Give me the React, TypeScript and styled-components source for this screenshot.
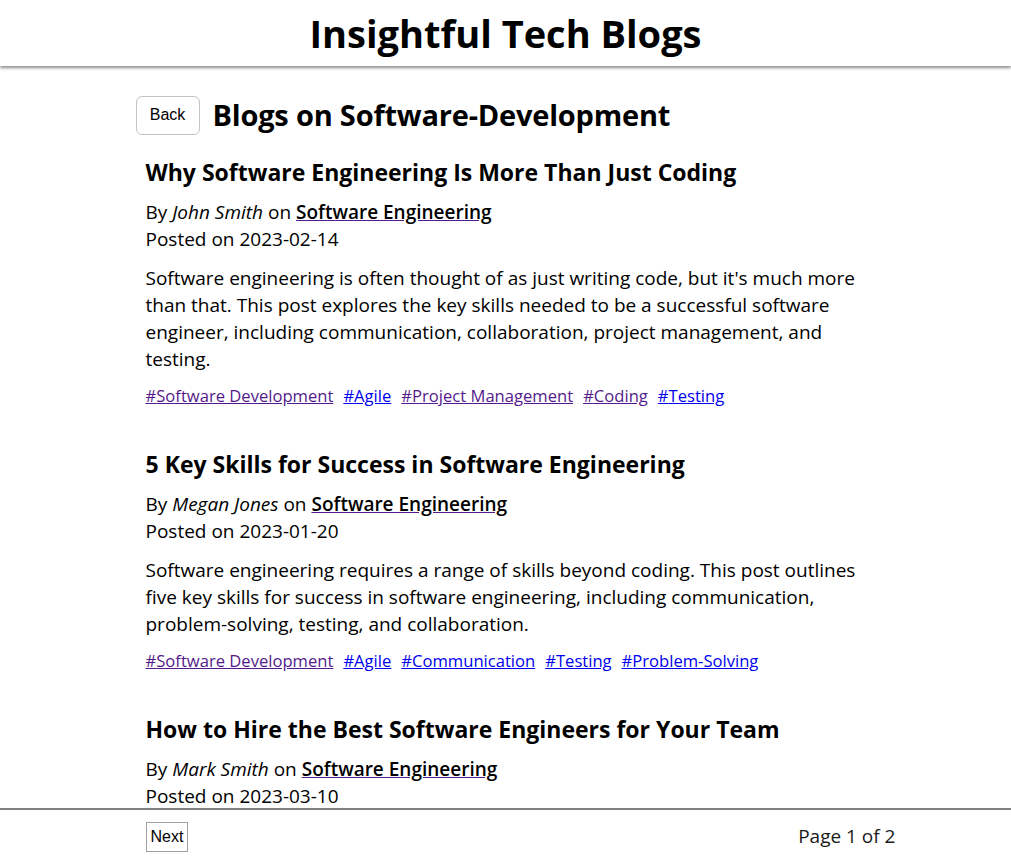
import React from "react";
import styled, { createGlobalStyle } from "styled-components";

const GlobalStyle = createGlobalStyle`
  html, body {
    margin: 0;
    padding: 0;
    background: #ffffff;
    color: #000000;
    font-family: "Open Sans", "Noto Sans", sans-serif;
  }
  * { box-sizing: border-box; }
`;

const Header = styled.header`
  height: 66px;
  display: flex;
  align-items: center;
  justify-content: center;
  background: #ffffff;
  box-shadow: 0 2px 3px rgba(0, 0, 0, 0.45);
  position: relative;
  z-index: 1;
`;

const SiteTitle = styled.h1`
  margin: 0;
  font-size: 38px;
  font-weight: 700;
  line-height: 48px;
`;

const Main = styled.main`
  max-width: 800px;
  margin: 0 auto;
  padding: 29px 30px 80px 30px;
`;

const TopRow = styled.div`
  display: flex;
  align-items: center;
  gap: 13px;
`;

const BackButton = styled.button`
  height: 39px;
  width: 64px;
  padding: 0;
  background: #ffffff;
  border: 1px solid #c4c4c4;
  border-radius: 6px;
  font-family: "Liberation Sans", Arial, sans-serif;
  font-size: 16px;
  color: #000000;
  cursor: pointer;
`;

const PageHeading = styled.h2`
  margin: 0;
  font-size: 29px;
  font-weight: 700;
  line-height: 40px;
  letter-spacing: -0.2px;
`;

const PostList = styled.div`
  padding-left: 10px;
  margin-top: 21px;
`;

const Post = styled.article`
  margin-bottom: 40px;
`;

const PostTitle = styled.h3`
  margin: 0 0 11px 0;
  font-size: 23px;
  font-weight: 700;
  line-height: 32px;
`;

const Meta = styled.div`
  font-size: 19px;
  line-height: 27px;
`;

const Author = styled.em`
  font-style: italic;
`;

const CategoryLink = styled.a`
  color: #000000;
  font-weight: 600;
  text-decoration: underline;
  text-decoration-color: #551a8b;
`;

const Description = styled.p`
  margin: 12px 0 11px 0;
  font-size: 19px;
  line-height: 27px;
`;

const Tags = styled.div`
  display: flex;
  flex-wrap: wrap;
  gap: 10px;
  font-size: 16.6px;
  line-height: 24px;
`;

const Tag = styled.a<{ $visited?: boolean }>`
  color: ${(p) => (p.$visited ? "#551a8b" : "#0000ee")};
  text-decoration: underline;
`;

const Footer = styled.footer`
  position: fixed;
  left: 0;
  right: 0;
  bottom: 0;
  height: 55px;
  background: #ffffff;
  border-top: 2px solid #808080;
  z-index: 2;
`;

const FooterInner = styled.div`
  max-width: 800px;
  height: 100%;
  margin: 0 auto;
  padding: 0 10px 0 40px;
  display: flex;
  align-items: center;
  justify-content: space-between;
`;

const NextButton = styled.button`
  height: 30px;
  padding: 0 4px;
  background: #ffffff;
  border: 1px solid #a0a0a0;
  border-radius: 0;
  font-family: "Liberation Sans", Arial, sans-serif;
  font-size: 16px;
  color: #000000;
`;

const PageInfo = styled.span`
  font-size: 19px;
  line-height: 27px;
  color: #1a1a1a;
`;

type TagItem = { label: string; visited?: boolean };
type PostItem = {
  title: string;
  author: string;
  category: string;
  date: string;
  description?: string;
  tags: TagItem[];
};

const posts: PostItem[] = [
  {
    title: "Why Software Engineering Is More Than Just Coding",
    author: "John Smith",
    category: "Software Engineering",
    date: "2023-02-14",
    description:
      "Software engineering is often thought of as just writing code, but it's much more than that. This post explores the key skills needed to be a successful software engineer, including communication, collaboration, project management, and testing.",
    tags: [
      { label: "Software Development", visited: true },
      { label: "Agile" },
      { label: "Project Management", visited: true },
      { label: "Coding", visited: true },
      { label: "Testing" },
    ],
  },
  {
    title: "5 Key Skills for Success in Software Engineering",
    author: "Megan Jones",
    category: "Software Engineering",
    date: "2023-01-20",
    description:
      "Software engineering requires a range of skills beyond coding. This post outlines five key skills for success in software engineering, including communication, problem-solving, testing, and collaboration.",
    tags: [
      { label: "Software Development", visited: true },
      { label: "Agile" },
      { label: "Communication" },
      { label: "Testing" },
      { label: "Problem-Solving" },
    ],
  },
  {
    title: "How to Hire the Best Software Engineers for Your Team",
    author: "Mark Smith",
    category: "Software Engineering",
    date: "2023-03-10",
    tags: [],
  },
];

export default function App() {
  return (
    <>
      <GlobalStyle />
      <Header>
        <SiteTitle>Insightful Tech Blogs</SiteTitle>
      </Header>
      <Main>
        <TopRow>
          <BackButton>Back</BackButton>
          <PageHeading>Blogs on Software-Development</PageHeading>
        </TopRow>
        <PostList>
          {posts.map((post) => (
            <Post key={post.title}>
              <PostTitle>{post.title}</PostTitle>
              <Meta>
                By <Author>{post.author}</Author> on{" "}
                <CategoryLink href="#">{post.category}</CategoryLink>
              </Meta>
              <Meta>Posted on {post.date}</Meta>
              {post.description && <Description>{post.description}</Description>}
              {post.tags.length > 0 && (
                <Tags>
                  {post.tags.map((t) => (
                    <Tag key={t.label} href="#" $visited={t.visited}>
                      #{t.label}
                    </Tag>
                  ))}
                </Tags>
              )}
            </Post>
          ))}
        </PostList>
      </Main>
      <Footer>
        <FooterInner>
          <NextButton>Next</NextButton>
          <PageInfo>Page 1 of 2</PageInfo>
        </FooterInner>
      </Footer>
    </>
  );
}
